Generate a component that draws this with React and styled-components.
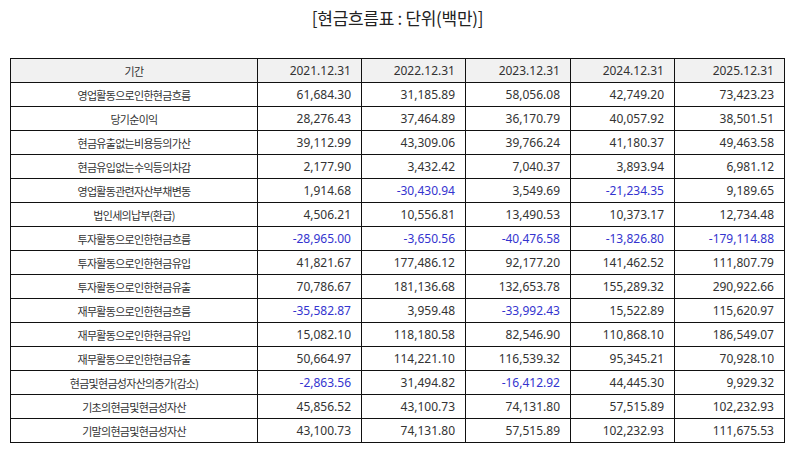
import React from "react";
import styled, { createGlobalStyle } from "styled-components";

const GlobalStyle = createGlobalStyle`
  body {
    margin: 0;
    background: #fff;
    font-family: "Noto Sans", "Noto Sans CJK KR", sans-serif;
  }
`;

const Page = styled.div`
  width: 794px;
  height: 452px;
  padding: 7px 9px 0 10px;
  box-sizing: border-box;
`;

const Title = styled.h1`
  margin: 0;
  height: 51px;
  text-align: center;
  font-family: "Noto Sans CJK KR", sans-serif;
  font-weight: 400;
  font-size: 17px;
  line-height: 22px;
  letter-spacing: -0.3px;
  color: #222;
`;

const Table = styled.table`
  width: 775px;
  border-collapse: collapse;
  table-layout: fixed;
  color: #333;
`;

const Col = styled.col`
  width: ${(p) => (p.$w ? `${p.$w}px` : "auto")};
`;

const Cell = styled.td`
  height: 23px;
  padding: 0 10px 0 6px;
  border: 1px solid #111;
  font-weight: 400;
  font-size: 12px;
  line-height: 14px;
  text-align: right;
  color: ${(p) => (p.$neg ? "#3434cf" : "#333")};
  background: ${(p) => (p.$head ? "#f1f1f1" : "#fff")};
  white-space: nowrap;
`;

const LabelCell = styled(Cell)`
  padding: 0;
  text-align: center;
  font-family: "Noto Sans CJK KR", sans-serif;
  font-size: 11px;
  letter-spacing: -0.7px;
`;

const years = ["2021.12.31", "2022.12.31", "2023.12.31", "2024.12.31", "2025.12.31"];
const widths = [247, 104, 104, 105, 104, 0];

const rows = [
  ["영업활동으로인한현금흐름", "61,684.30", "31,185.89", "58,056.08", "42,749.20", "73,423.23"],
  ["당기순이익", "28,276.43", "37,464.89", "36,170.79", "40,057.92", "38,501.51"],
  ["현금유출없는비용등의가산", "39,112.99", "43,309.06", "39,766.24", "41,180.37", "49,463.58"],
  ["현금유입없는수익등의차감", "2,177.90", "3,432.42", "7,040.37", "3,893.94", "6,981.12"],
  ["영업활동관련자산부채변동", "1,914.68", "-30,430.94", "3,549.69", "-21,234.35", "9,189.65"],
  ["법인세의납부(환급)", "4,506.21", "10,556.81", "13,490.53", "10,373.17", "12,734.48"],
  ["투자활동으로인한현금흐름", "-28,965.00", "-3,650.56", "-40,476.58", "-13,826.80", "-179,114.88"],
  ["투자활동으로인한현금유입", "41,821.67", "177,486.12", "92,177.20", "141,462.52", "111,807.79"],
  ["투자활동으로인한현금유출", "70,786.67", "181,136.68", "132,653.78", "155,289.32", "290,922.66"],
  ["재무활동으로인한현금흐름", "-35,582.87", "3,959.48", "-33,992.43", "15,522.89", "115,620.97"],
  ["재무활동으로인한현금유입", "15,082.10", "118,180.58", "82,546.90", "110,868.10", "186,549.07"],
  ["재무활동으로인한현금유출", "50,664.97", "114,221.10", "116,539.32", "95,345.21", "70,928.10"],
  ["현금및현금성자산의증가(감소)", "-2,863.56", "31,494.82", "-16,412.92", "44,445.30", "9,929.32"],
  ["기초의현금및현금성자산", "45,856.52", "43,100.73", "74,131.80", "57,515.89", "102,232.93"],
  ["기말의현금및현금성자산", "43,100.73", "74,131.80", "57,515.89", "102,232.93", "111,675.53"],
];

export default function App() {
  return (
    <>
      <GlobalStyle />
      <Page>
        <Title>[현금흐름표 : 단위(백만)]</Title>
        <Table>
          <colgroup>
            {widths.map((w, i) => (
              <Col key={i} $w={w} />
            ))}
          </colgroup>
          <thead>
            <tr>
              <LabelCell as="th" $head>기간</LabelCell>
              {years.map((y) => (
                <Cell as="th" $head key={y}>{y}</Cell>
              ))}
            </tr>
          </thead>
          <tbody>
            {rows.map(([label, ...vals]) => (
              <tr key={label}>
                <LabelCell>{label}</LabelCell>
                {vals.map((v, i) => (
                  <Cell key={i} $neg={v.startsWith("-")}>{v}</Cell>
                ))}
              </tr>
            ))}
          </tbody>
        </Table>
      </Page>
    </>
  );
}
